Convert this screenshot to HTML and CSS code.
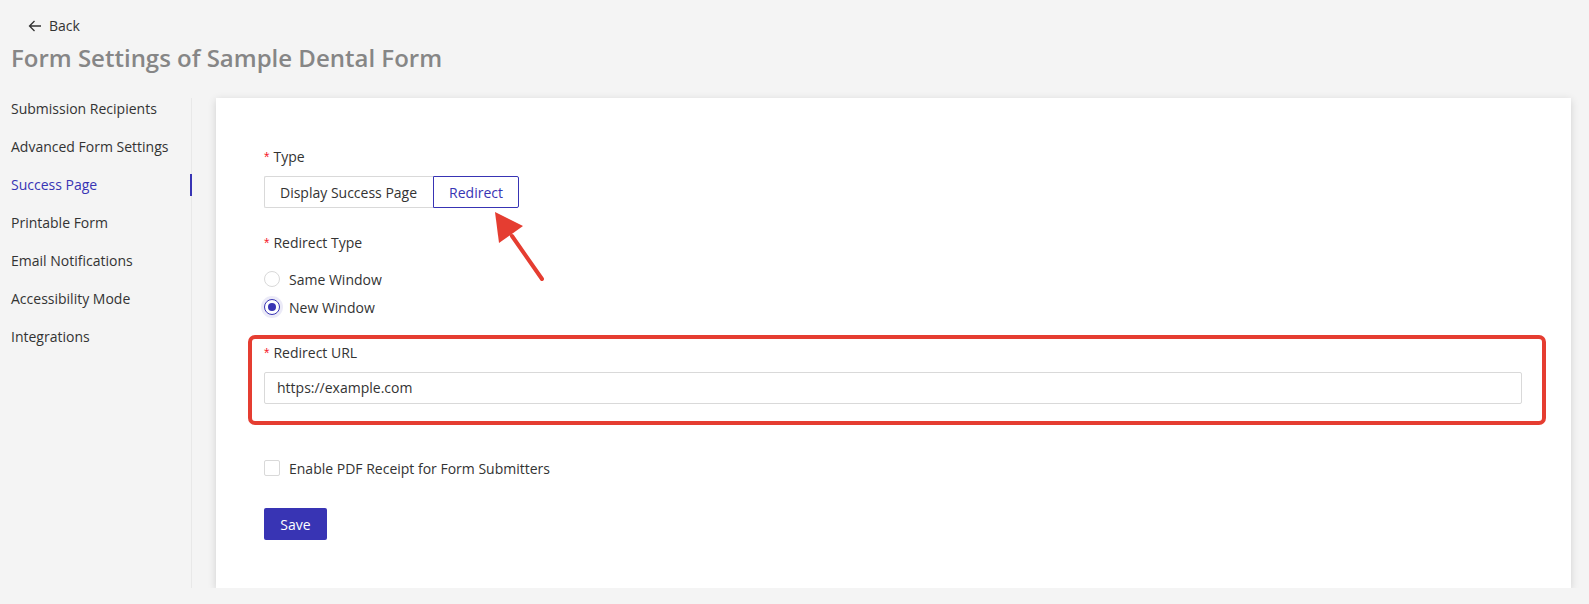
FILE: index.html
```html
<!DOCTYPE html>
<html lang="en">
<head>
<meta charset="utf-8">
<title>Form Settings</title>
<link rel="stylesheet" href="styles.css">
</head>
<body>
<div class="page">
  <header class="header">
    <a class="back" href="#">
      <svg class="back-icon" width="14" height="14" viewBox="0 0 14 14" aria-hidden="true">
        <path d="M13 7H1.5M6.5 2L1.5 7l5 5" fill="none" stroke="#333" stroke-width="1.3"/>
      </svg>
      <span>Back</span>
    </a>
    <h1 class="title">Form Settings of Sample Dental Form</h1>
  </header>
  <div class="main">
    <nav class="sidebar">
      <a class="nav-item" href="#">Submission Recipients</a>
      <a class="nav-item" href="#">Advanced Form Settings</a>
      <a class="nav-item active" href="#">Success Page</a>
      <a class="nav-item" href="#">Printable Form</a>
      <a class="nav-item" href="#">Email Notifications</a>
      <a class="nav-item" href="#">Accessibility Mode</a>
      <a class="nav-item" href="#">Integrations</a>
    </nav>
    <section class="card">
      <div class="field">
        <label class="label"><span class="req">*</span>Type</label>
        <div class="segmented">
          <button class="seg">Display Success Page</button>
          <button class="seg selected">Redirect</button>
        </div>
      </div>
      <svg class="arrow" width="64" height="80" viewBox="0 0 64 80" aria-hidden="true">
        <line x1="26" y1="30" x2="56" y2="73" stroke="#e53d31" stroke-width="4" stroke-linecap="round"/>
        <polygon points="9,6 37,20 13,37" fill="#e53d31"/>
      </svg>
      <div class="field field-redirect-type">
        <label class="label"><span class="req">*</span>Redirect Type</label>
        <div class="radios">
          <label class="radio-row"><span class="radio"></span>Same Window</label>
          <label class="radio-row"><span class="radio checked"></span>New Window</label>
        </div>
      </div>
      <div class="field field-url">
        <label class="label"><span class="req">*</span>Redirect URL</label>
        <div class="input">https://example.com</div>
        <div class="highlight"></div>
      </div>
      <label class="check-row"><span class="checkbox"></span>Enable PDF Receipt for Form Submitters</label>
      <button class="save">Save</button>
    </section>
  </div>
</div>
</body>
</html>
```

FILE: styles.css
```css
* { box-sizing: border-box; }
html, body {
  margin: 0;
  background: #f4f4f4;
  font-family: "Open Sans", "Liberation Sans", sans-serif;
  font-size: 14px;
  color: #333;
}
.page {
  padding: 15px 18px 0 11px;
}
.header {
  display: flex;
  flex-direction: column;
}
.back {
  display: flex;
  align-items: center;
  gap: 7px;
  height: 22px;
  margin-left: 17px;
  color: #333;
  text-decoration: none;
  line-height: 22px;
}
.back-icon { display: block; }
.title {
  margin: 5px 0 0;
  font-size: 24px;
  line-height: 32px;
  font-weight: 600;
  color: #868686;
}
.main {
  display: flex;
  gap: 24px;
  margin-top: 24px;
  height: 490px;
}
.sidebar {
  width: 181px;
  flex: none;
  border-right: 1px solid #e8e8e8;
  display: flex;
  flex-direction: column;
  gap: 16px;
}
.nav-item {
  position: relative;
  display: block;
  height: 22px;
  line-height: 22px;
  color: #333;
  text-decoration: none;
  white-space: nowrap;
}
.nav-item.active { color: #3834b4; }
.nav-item.active::after {
  content: "";
  position: absolute;
  right: -1px;
  top: 0;
  width: 2px;
  height: 22px;
  background: #3834b4;
}
.card {
  position: relative;
  flex: 1;
  background: #fff;
  box-shadow: 0 2px 8px rgba(0,0,0,0.15);
  padding: 48px 49px 48px 48px;
  display: flex;
  flex-direction: column;
  align-items: flex-start;
}
.field {
  display: flex;
  flex-direction: column;
  align-items: flex-start;
  gap: 8px;
}
.label {
  line-height: 22px;
  height: 22px;
  display: flex;
  align-items: center;
}
.req {
  color: #f5222d;
  margin-right: 4px;
  font-family: SimSun, "Liberation Sans", sans-serif;
  font-size: 14px;
}
.segmented { display: flex; }
.seg {
  height: 32px;
  font-family: inherit;
  font-size: 14px;
  color: #333;
  background: #fff;
  border: 1px solid #d9d9d9;
  padding: 0 15px;
  margin: 0;
  cursor: pointer;
}
.seg:first-child { border-radius: 2px 0 0 2px; border-right: none; padding: 0 16px 0 15px; }
.seg.selected {
  border-color: #3834b4;
  color: #3834b4;
  border-radius: 0 2px 2px 0;
  padding: 0 15px;
}
.arrow {
  position: absolute;
  left: 270px;
  top: 108px;
}
.field-redirect-type {
  margin-top: 24px;
  gap: 11px;
}
.radios {
  display: flex;
  flex-direction: column;
}
.radio-row {
  display: flex;
  align-items: center;
  height: 28px;
  gap: 9px;
}
.radio {
  width: 16px;
  height: 16px;
  border-radius: 50%;
  border: 1px solid #d9d9d9;
  background: #fff;
  position: relative;
}
.radio.checked {
  border-color: #3834b4;
  box-shadow: 0 0 0 3px rgba(56, 52, 180, 0.1);
}
.radio.checked::after {
  content: "";
  position: absolute;
  left: 3px;
  top: 3px;
  width: 8px;
  height: 8px;
  border-radius: 50%;
  background: #3834b4;
}
.field-url {
  position: relative;
  margin-top: 21px;
  align-self: stretch;
}
.input {
  align-self: stretch;
  height: 32px;
  border: 1px solid #d9d9d9;
  border-radius: 2px;
  padding: 0 12px;
  line-height: 30px;
  color: #333;
}
.highlight {
  position: absolute;
  left: -16px;
  top: -7px;
  right: -24px;
  bottom: -21px;
  border: 4px solid #e53d31;
  border-radius: 7px;
  pointer-events: none;
}
.check-row {
  margin-top: 53px;
  display: flex;
  align-items: center;
  gap: 9px;
  height: 22px;
}
.checkbox {
  width: 16px;
  height: 16px;
  border: 1px solid #d9d9d9;
  border-radius: 2px;
  background: #fff;
}
.save {
  margin-top: 29px;
  height: 32px;
  width: 63px;
  padding: 0;
  background: #3834b4;
  color: #fff;
  border: none;
  border-radius: 2px;
  font-family: inherit;
  font-size: 14px;
}
```
